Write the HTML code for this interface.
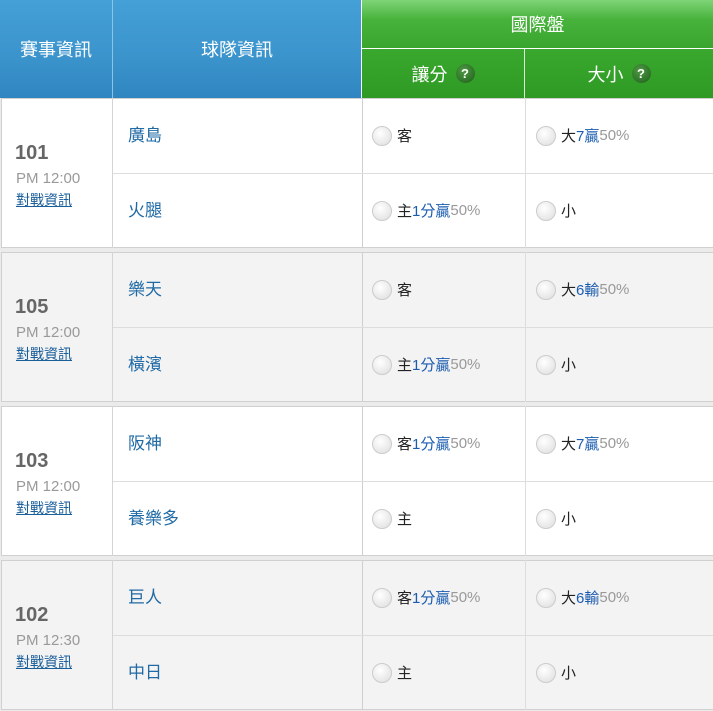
<!DOCTYPE html>
<html><head><meta charset="utf-8"><style>
*{margin:0;padding:0;box-sizing:border-box}
body{width:713px;height:711px;overflow:hidden;background:#ebebeb;font-family:"Liberation Sans","Noto Sans CJK TC",sans-serif;position:relative}
.a{position:absolute}
.hb{background:linear-gradient(#44a0d6,#3b93cc 60%,#2f86c0);color:#fff;font-size:18px;display:flex;align-items:center;justify-content:center}
.hg1{background:linear-gradient(#7ed477,#48b33c 40%,#3aa52e);color:#fff;font-size:18px;display:flex;align-items:center;justify-content:center}
.hg2{background:linear-gradient(#3aa82e,#2e9a24);color:#fff;font-size:18px;display:flex;align-items:center;justify-content:center}
.q{display:inline-block;width:19px;height:19px;border-radius:50%;background:radial-gradient(circle at 40% 35%,#4d9a44,#1f5e19);color:#fff;font-size:13px;font-weight:bold;text-align:center;line-height:19px;margin-left:8px}
.team{color:#1f6aa5;font-size:17px;position:absolute;left:14px}
.r{display:inline-block;width:20px;height:20px;border-radius:50%;border:1px solid #ccc;background:radial-gradient(circle at 40% 35%,#fff,#dcdcdc);vertical-align:middle;margin-right:5px}
.opt{position:absolute;left:10px;font-size:15px;color:#222;display:flex;align-items:center}
.b{color:#1a5cb0}.p{color:#999}
.num{position:absolute;left:15px;font-size:20px;font-weight:bold;color:#666}
.tm{position:absolute;left:16px;font-size:15px;color:#999}
.lk{position:absolute;left:16px;font-size:14px;color:#1a5e9a;text-decoration:underline}
</style></head><body>
<div class="a hb" style="left:0;top:0;width:113px;height:98px;border-right:1px solid #8fc3e6">賽事資訊</div>
<div class="a hb" style="left:113px;top:0;width:249px;height:98px;border-right:1px solid #fff">球隊資訊</div>
<div class="a hg1" style="left:362px;top:0;width:351px;height:49px;border-bottom:1px solid #fff">國際盤</div>
<div class="a hg2" style="left:362px;top:49px;width:163px;height:49px;border-right:1px solid #d8f0d4">讓分<span class="q">?</span></div>
<div class="a hg2" style="left:525px;top:49px;width:188px;height:49px">大小<span class="q">?</span></div>

<div id="gs"></div>
<script>
var data=[["101","PM 12:00","廣島","火腿",'客','大<span class="b">7贏</span><span class="p">50%</span>','主<span class="b">1分贏</span><span class="p">50%</span>','小',"#fff"],
["105","PM 12:00","樂天","橫濱",'客','大<span class="b">6輸</span><span class="p">50%</span>','主<span class="b">1分贏</span><span class="p">50%</span>','小',"#f3f3f3"],
["103","PM 12:00","阪神","養樂多",'客<span class="b">1分贏</span><span class="p">50%</span>','大<span class="b">7贏</span><span class="p">50%</span>','主','小',"#fff"],
["102","PM 12:30","巨人","中日",'客<span class="b">1分贏</span><span class="p">50%</span>','大<span class="b">6輸</span><span class="p">50%</span>','主','小',"#f3f3f3"]];
var tops=[98,252,406,560],h="";
data.forEach(function(d,i){var t=tops[i];
h+='<div class="a" style="left:1px;top:'+t+'px;width:712px;height:150px;background:'+d[8]+';border-top:1px solid #d0d0d0;border-bottom:1px solid #d0d0d0;border-left:1px solid #d0d0d0"></div>';
h+='<div class="a" style="left:112px;top:'+t+'px;width:1px;height:150px;background:#d4d4d4"></div>';
h+='<div class="a" style="left:362px;top:'+t+'px;width:1px;height:150px;background:#cfcfcf"></div>';
h+='<div class="a" style="left:525px;top:'+t+'px;width:1px;height:150px;background:#ddd"></div>';
h+='<div class="a" style="left:113px;top:'+(t+75)+'px;width:600px;height:1px;background:#ddd"></div>';
h+='<div class="num" style="top:'+(t+44)+'px">'+d[0]+'</div>';
h+='<div class="tm" style="top:'+(t+72)+'px">'+d[1]+'</div>';
h+='<div class="lk" style="top:'+(t+92)+'px">對戰資訊</div>';
h+='<div class="team" style="left:128px;top:'+(t+23)+'px">'+d[2]+'</div>';
h+='<div class="team" style="left:128px;top:'+(t+98)+'px">'+d[3]+'</div>';
h+='<div class="opt" style="left:372px;top:'+(t+27)+'px"><span class="r"></span>'+d[4]+'</div>';
h+='<div class="opt" style="left:536px;top:'+(t+27)+'px"><span class="r"></span>'+d[5]+'</div>';
h+='<div class="opt" style="left:372px;top:'+(t+102)+'px"><span class="r"></span>'+d[6]+'</div>';
h+='<div class="opt" style="left:536px;top:'+(t+102)+'px"><span class="r"></span>'+d[7]+'</div>';
});
document.getElementById('gs').innerHTML=h;
</script>
</body></html>
